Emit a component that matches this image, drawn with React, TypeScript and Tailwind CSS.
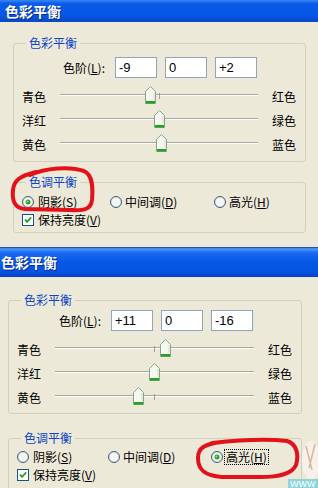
import React from 'react';

const CJK = "font-['Noto_Sans_CJK_SC',sans-serif]";
const NUM = "font-['Liberation_Sans',Arial,sans-serif]";

type Variant = {
  title: string;
  values: number[];
  selected: number;
  focus: boolean;
  wrap: string;
  bar: string;
  body: string;
  g1: string;
  inputRow: string;
  labelW: string;
  rows: string;
  track: string;
  g2: string;
  radioRow: string;
  item1: string;
  item2: string;
};

const TOP: Variant = {
  title: '色彩平衡',
  values: [-9, 0, 2],
  selected: 0,
  focus: false,
  wrap: 'h-[247px]',
  bar: 'h-[22px] pl-[5px] bg-[linear-gradient(180deg,#3a86f2_0%,#0b5ce8_16%,#0556e3_70%,#0a47c6_100%)]',
  body: 'pl-[13px] pr-[12px]',
  g1: 'mt-[14px] pb-[4px]',
  inputRow: 'mt-[7px]',
  labelW: 'w-[101px]',
  rows: 'mt-[7px]',
  track: 'w-[198px]',
  g2: 'mt-[13px] pb-[3px]',
  radioRow: 'mt-[4px]',
  item1: 'w-[88px]',
  item2: 'w-[104px]',
};

const BOTTOM: Variant = {
  title: '色彩平衡',
  values: [11, 0, -16],
  selected: 2,
  focus: true,
  wrap: 'h-[241px]',
  bar: 'h-[30px] pl-[1px] bg-[linear-gradient(180deg,#0b3aa8_0%,#4a98fa_6%,#1a68ee_20%,#0558e6_50%,#0554e2_80%,#0444c4_100%)]',
  body: 'pl-[8px] pr-[16px]',
  g1: 'mt-[16px] pb-[3px]',
  inputRow: 'mt-[3px]',
  labelW: 'w-[102px]',
  rows: 'mt-[7px]',
  track: 'w-[199px]',
  g2: 'mt-[17px] pb-[6px]',
  radioRow: 'mt-[3px]',
  item1: 'w-[91px]',
  item2: 'w-[103px]',
};

const SLIDERS = [
  ['青色', '红色'],
  ['洋红', '绿色'],
  ['黄色', '蓝色'],
];

function Thumb() {
  return (
    <svg width="11" height="18" viewBox="0 0 11 18">
      <polygon points="5.5,0.5 10.5,5.5 10.5,17.5 0.5,17.5 0.5,5.5" fill="#f6f6f0" stroke="#88a488" />
      <rect x="1" y="15" width="9" height="2.5" fill="#21a321" />
      <line x1="2" y1="6" x2="2" y2="14" stroke="#ffffff" />
      <line x1="9" y1="6" x2="9" y2="14" stroke="#d8d8cc" />
    </svg>
  );
}

function Radio({ on }: { on: boolean }) {
  return (
    <svg width="12" height="12" viewBox="0 0 12 12" className="shrink-0">
      <circle cx="6" cy="6" r="5.5" fill="#e6e6de" stroke="#3b5f86" />
      <circle cx="6" cy="6" r="4" fill="#f6f6f2" />
      {on && <circle cx="6" cy="6" r="2.5" fill="#2aa42a" />}
      {on && <circle cx="5.4" cy="5.4" r="1" fill="#8ee08e" />}
    </svg>
  );
}

function Checkbox() {
  return (
    <svg width="12" height="12" viewBox="0 0 12 12" className="shrink-0">
      <rect x="0.5" y="0.5" width="11" height="11" fill="#ffffff" stroke="#1c5180" />
      <path d="M3 5.5 L5 7.8 L9.2 3.4" fill="none" stroke="#21a121" strokeWidth="1.8" />
    </svg>
  );
}

function Dialog({ v }: { v: Variant }) {
  return (
    <div className={`${v.wrap} overflow-hidden bg-[#ece9d8]`}>
      <div className={`${v.bar} flex items-center`}>
        <span className={`${CJK} text-[14px] leading-[16px] font-bold text-white [text-shadow:1px_1px_0_#0a2a86]`}>
          {v.title}
        </span>
      </div>
      <div className={v.body}>
        <fieldset className={`${v.g1} border border-[#d0d0bf] rounded-[3px]`}>
          <legend className={`${CJK} ml-[12px] px-[3px] text-[12px] leading-[14px] text-[#0c45c8]`}>色彩平衡</legend>
          <div className={`${v.inputRow} flex items-center h-[21px]`}>
            <div className={`${v.labelW} ${CJK} pr-[10px] text-right text-[12px] leading-[14px] text-black`}>
              色阶(<u>L</u>):
            </div>
            <div className="flex gap-[8px]">
              {v.values.map((n, i) => (
                <div
                  key={i}
                  className={`${NUM} w-[42px] h-[21px] border border-[#8fa5bd] bg-white pl-[3px] text-[13px] leading-[19px] text-black`}
                >
                  {n > 0 ? `+${n}` : `${n}`}
                </div>
              ))}
            </div>
          </div>
          <div className={v.rows}>
            {SLIDERS.map(([l, r], i) => (
              <div key={l} className={`flex items-center h-[24px] ${CJK} text-[12px] leading-[14px] text-black`}>
                <div className="w-[46px] pl-[8px]">{l}</div>
                <div className={`relative h-full ${v.track}`}>
                  <div className="mt-[9px] h-[2px] bg-[linear-gradient(#a8a89a_50%,#ffffff_50%)]" />
                  <div className="absolute top-[8px] w-px h-[6px] bg-[#a0a094]" style={{ left: 99 }} />
                  <div className="absolute top-[1px] leading-none" style={{ left: 99 + v.values[i] - 5 }}>
                    <Thumb />
                  </div>
                </div>
                <div className="ml-[14px]">{r}</div>
              </div>
            ))}
          </div>
        </fieldset>

        <fieldset className={`${v.g2} border border-[#d0d0bf] rounded-[3px]`}>
          <legend className={`${CJK} ml-[12px] px-[3px] text-[12px] leading-[14px] text-[#0c45c8]`}>色调平衡</legend>
          <div className={`${v.radioRow} flex items-center h-[18px] pl-[8px] ${CJK} text-[12px] leading-[14px] text-black`}>
            <div className={`flex items-center ${v.item1}`}>
              <Radio on={v.selected === 0} />
              <span className="ml-[4px]">阴影(<u>S</u>)</span>
            </div>
            <div className={`flex items-center ${v.item2}`}>
              <Radio on={v.selected === 1} />
              <span className="ml-[3px]">中间调(<u>D</u>)</span>
            </div>
            <div className="flex items-center">
              <Radio on={v.selected === 2} />
              <span className={v.focus ? 'ml-[2px] px-[1px] outline outline-1 outline-dotted outline-black' : 'ml-[3px]'}>
                高光(<u>H</u>)
              </span>
            </div>
          </div>
          <div className={`flex items-center h-[18px] pl-[8px] ${CJK} text-[12px] leading-[14px] text-black`}>
            <Checkbox />
            <span className="ml-[4px]">保持亮度(<u>V</u>)</span>
          </div>
        </fieldset>
      </div>
    </div>
  );
}

export default function App() {
  return (
    <div className="relative w-[318px] h-[488px] overflow-hidden bg-[#ece9d8]">
      <Dialog v={TOP} />
      <Dialog v={BOTTOM} />

      {/* hand-drawn red marks and the watermark sit over the dialogs */}
      <svg className="absolute inset-0 pointer-events-none" width="318" height="488" viewBox="0 0 318 488">
        <path
          d="M30 175 C45 168 70 166 84 171 C93 175 93 188 92 200 C91 209 85 211 70 210 L25 209 C14 208 12 200 13 190 C14 180 20 176 36 172"
          fill="none"
          stroke="#e3121a"
          strokeWidth="4"
          strokeLinecap="round"
        />
        <path
          d="M212 443 C240 440 270 439 287 441 C297 444 299 455 296 465 C292 474 280 477 260 477 L222 477 C205 476 198 470 198 458 C198 448 204 444 222 442"
          fill="none"
          stroke="#e3121a"
          strokeWidth="4"
          strokeLinecap="round"
        />
        <ellipse cx="311" cy="460" rx="9" ry="19" fill="#f8f2ee" opacity="0.9" />
        <path d="M306 446 L312 470 M315 444 L309 468" stroke="#c9a27a" strokeWidth="1.5" opacity="0.7" />
        <rect x="288" y="479" width="30" height="9" fill="#8fd4dc" />
        <text x="290" y="487" fontSize="9" fill="#ffffff" fontFamily="Liberation Sans, Arial, sans-serif">WWW</text>
      </svg>
    </div>
  );
}
